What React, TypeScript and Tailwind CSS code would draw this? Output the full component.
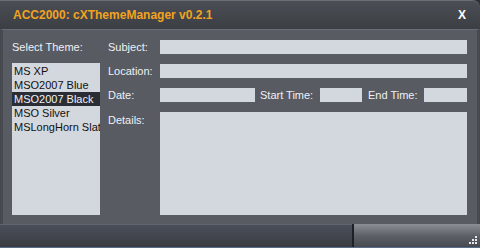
const themes = ['MS XP', 'MSO2007 Blue', 'MSO2007 Black', 'MSO Silver', 'MSLongHorn Slate'];

function Field({ className }: { className?: string }) {
  return <div className={`h-[14px] bg-[#d3d7de] ${className ?? ''}`} />;
}

export default function App() {
  return (
    <div
      className="flex h-[248px] w-[480px] flex-col overflow-hidden bg-[#2e3136] text-[11px]"
      style={{ fontFamily: '"Liberation Sans", Arial, sans-serif' }}
    >
      {/* title bar */}
      <div className="flex h-[29px] items-center justify-between rounded-tr-[8px] border-t border-[#6b6f75] bg-gradient-to-b from-[#4b4f55] to-[#3b3f44] pl-[13px] pr-[14px]">
        <span className="text-[12px] font-bold text-[#f2a21f]">ACC2000: cXThemeManager v0.2.1</span>
        <span className="text-[12px] font-bold text-white">X</span>
      </div>

      {/* body */}
      <div className="flex flex-1 border-x-[3px] border-t border-x-[#46494f] border-t-[#6a6e74] bg-[#585b62] pl-[9px] pr-[10px] pt-[10px] text-[#eef1f5]">
        <div className="flex w-[88px] flex-col">
          <div className="h-[14px] leading-[14px]">Select Theme:</div>
          <div className="mt-[9px] h-[152px] bg-[#d3d7de] pt-[1px] text-[#111]">
            {themes.map((t) => (
              <div
                key={t}
                className={`h-[14px] overflow-hidden whitespace-nowrap pl-[2px] leading-[14px] ${
                  t === 'MSO2007 Black' ? 'bg-[#2a2d33] text-[#f0f2f5]' : ''
                }`}
              >
                {t}
              </div>
            ))}
          </div>
        </div>

        <div className="ml-[8px] flex flex-1 flex-col gap-[10px]">
          <div className="flex items-center">
            <span className="w-[52px] leading-[14px]">Subject:</span>
            <Field className="flex-1" />
          </div>
          <div className="flex items-center">
            <span className="w-[52px] leading-[14px]">Location:</span>
            <Field className="flex-1" />
          </div>
          <div className="flex items-center">
            <span className="w-[52px] leading-[14px]">Date:</span>
            <Field className="w-[95px]" />
            <span className="ml-[5px] w-[60px] leading-[14px]">Start Time:</span>
            <Field className="w-[42px]" />
            <span className="ml-[6px] w-[56px] leading-[14px]">End Time:</span>
            <Field className="flex-1" />
          </div>
          <div className="flex">
            <span className="w-[52px] pt-[1px] leading-[14px]">Details:</span>
            <div className="h-[103px] flex-1 bg-[#d3d7de]" />
          </div>
        </div>
      </div>

      {/* status bar */}
      <div className="flex h-[24px] border-b border-[#5a6e8c]">
        <div className="flex-1 border-t border-[#60646b] bg-gradient-to-b from-[#4a4e5a] to-[#3a3d42]" />
        <div className="relative w-[128px] border-l-2 border-[#1e2024] bg-gradient-to-b from-[#8c9096] via-[#5e6268] to-[#464a50]">
          <div className="absolute bottom-[3px] right-[3px] grid grid-cols-3 gap-[1px]">
            <span className="h-[2px] w-[2px]" />
            <span className="h-[2px] w-[2px]" />
            <span className="h-[2px] w-[2px] bg-[#e8e8e8]" />
            <span className="h-[2px] w-[2px]" />
            <span className="h-[2px] w-[2px] bg-[#e8e8e8]" />
            <span className="h-[2px] w-[2px] bg-[#e8e8e8]" />
            <span className="h-[2px] w-[2px] bg-[#e8e8e8]" />
            <span className="h-[2px] w-[2px] bg-[#e8e8e8]" />
            <span className="h-[2px] w-[2px] bg-[#e8e8e8]" />
          </div>
        </div>
      </div>
    </div>
  );
}
